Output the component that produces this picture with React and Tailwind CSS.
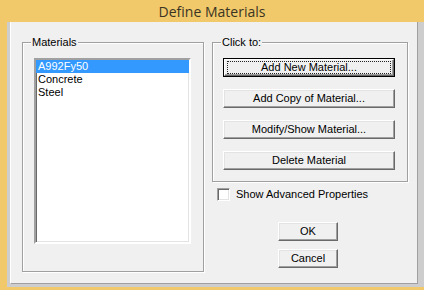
import React, { useState } from 'react';

// Classic Win32 "Define Materials" dialog

const font = { fontFamily: '"Liberation Sans", Arial, sans-serif' };

const btn3d =
  'border border-t-white border-l-white border-r-[#696969] border-b-[#696969] shadow-[inset_-1px_-1px_0_#a0a0a0,inset_1px_1px_0_#e3e3e3] bg-[#f0f0f0]';

function Button({ children, isDefault, className = '' }) {
  if (isDefault) {
    return (
      <button className={`relative h-[19px] border border-[#000] bg-[#f0f0f0] text-[11px] leading-none text-black ${className}`}>
        <span className="absolute inset-0 border border-t-white border-l-white border-r-[#696969] border-b-[#696969] shadow-[inset_-1px_-1px_0_#a0a0a0]" />
        <span className="absolute inset-x-[3px] inset-y-[2px] border border-dotted border-[#222]" />
        <span className="relative">{children}</span>
      </button>
    );
  }
  return (
    <button className={`h-[19px] ${btn3d} text-[11px] leading-none text-black ${className}`}>
      {children}
    </button>
  );
}

function GroupBox({ label, className = '', children }) {
  return (
    <div className={`relative border border-[#a0a0a0] shadow-[1px_1px_0_white,inset_1px_1px_0_white] ${className}`}>
      <span className="absolute left-[8px] top-[-7px] bg-[#f0f0f0] px-[1px] text-[11px] leading-[13px] text-black">
        {label}
      </span>
      {children}
    </div>
  );
}

export default function App() {
  const [selected, setSelected] = useState(0);
  const [advanced, setAdvanced] = useState(false);
  const materials = ['A992Fy50', 'Concrete', 'Steel'];

  return (
    <div className="w-[424px] h-[290px] bg-[#f1c96a] flex flex-col overflow-hidden" style={font}>
      {/* Title bar */}
      <div className="h-[22px] flex items-center justify-center text-[14px] text-[#3b3424]" style={{ fontFamily: '"Open Sans", "Noto Sans", sans-serif' }}>
        Define Materials
      </div>

      {/* Frame */}
      <div className="h-[265px] ml-[7px] bg-[#cdcdcd] pl-[3px] pr-[6px] pb-[3px]">
        <div className="h-full bg-[#f0f0f0] border-l border-l-white border-r border-r-[#a0a0a0] border-b border-b-[#a0a0a0] flex pl-[11px] pt-[20px]">
          {/* Materials group */}
          <GroupBox label="Materials" className="w-[182px] h-[230px] pl-[11px] pt-[15px]">
            <div className="w-[157px] h-[186px] bg-white border-2 border-t-[#a0a0a0] border-l-[#a0a0a0] border-r-white border-b-white shadow-[inset_1px_1px_0_#696969,inset_-1px_-1px_0_#e3e3e3]">
              {materials.map((m, i) => (
                <div
                  key={m}
                  onClick={() => setSelected(i)}
                  className={`h-[13px] pl-[2px] text-[11px] leading-[13px] ${i === selected ? 'bg-[#3399ff] text-white' : 'text-black'}`}
                >
                  {m}
                </div>
              ))}
            </div>
          </GroupBox>

          {/* Right column */}
          <div className="ml-[8px] flex flex-col">
            <GroupBox label="Click to:" className="w-[196px] h-[140px] pl-[10px] pt-[15px] flex flex-col gap-[12px]">
              <Button isDefault className="w-[172px]">Add New Material...</Button>
              <Button className="w-[172px]">Add Copy of Material...</Button>
              <Button className="w-[172px]">Modify/Show Material...</Button>
              <Button className="w-[172px]">Delete Material</Button>
            </GroupBox>

            <label className="mt-[6px] ml-[5px] flex items-center gap-[6px] text-[11px] leading-[13px] text-black" onClick={() => setAdvanced(a => !a)}>
              <span className="w-[13px] h-[13px] bg-white border border-t-[#a0a0a0] border-l-[#a0a0a0] border-r-white border-b-white shadow-[inset_1px_1px_0_#696969,inset_-1px_-1px_0_#e3e3e3] flex items-center justify-center text-[9px]">
                {advanced ? '✓' : ''}
              </span>
              Show Advanced Properties
            </label>

            <div className="ml-[66px] mt-[21px] flex flex-col gap-[8px]">
              <Button className="w-[60px]">OK</Button>
              <Button className="w-[60px]">Cancel</Button>
            </div>
          </div>
        </div>
      </div>
    </div>
  );
}
